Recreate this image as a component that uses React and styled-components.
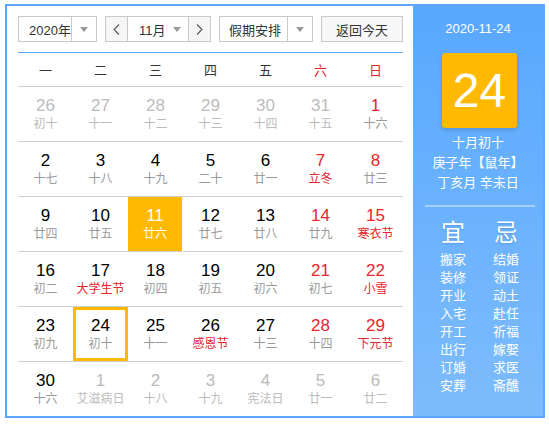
import React from "react";
import styled, { createGlobalStyle } from "styled-components";

const GlobalStyle = createGlobalStyle`
  html, body {
    margin: 0;
    padding: 0;
    background: #fff;
    font-family: "Liberation Sans", "Noto Sans CJK SC", sans-serif;
  }
`;

const days = [
  [
    { d: 26, l: "初十", other: true },
    { d: 27, l: "十一", other: true },
    { d: 28, l: "十二", other: true },
    { d: 29, l: "十三", other: true },
    { d: 30, l: "十四", other: true },
    { d: 31, l: "十五", other: true },
    { d: 1, l: "十六" },
  ],
  [
    { d: 2, l: "十七" },
    { d: 3, l: "十八" },
    { d: 4, l: "十九" },
    { d: 5, l: "二十" },
    { d: 6, l: "廿一" },
    { d: 7, l: "立冬", fest: true },
    { d: 8, l: "廿三" },
  ],
  [
    { d: 9, l: "廿四" },
    { d: 10, l: "廿五" },
    { d: 11, l: "廿六", selected: true },
    { d: 12, l: "廿七" },
    { d: 13, l: "廿八" },
    { d: 14, l: "廿九" },
    { d: 15, l: "寒衣节", fest: true },
  ],
  [
    { d: 16, l: "初二" },
    { d: 17, l: "大学生节", fest: true },
    { d: 18, l: "初四" },
    { d: 19, l: "初五" },
    { d: 20, l: "初六" },
    { d: 21, l: "初七" },
    { d: 22, l: "小雪", fest: true },
  ],
  [
    { d: 23, l: "初九" },
    { d: 24, l: "初十", today: true },
    { d: 25, l: "十一" },
    { d: 26, l: "感恩节", fest: true },
    { d: 27, l: "十三" },
    { d: 28, l: "十四" },
    { d: 29, l: "下元节", fest: true },
  ],
  [
    { d: 30, l: "十六" },
    { d: 1, l: "艾滋病日", other: true },
    { d: 2, l: "十八", other: true },
    { d: 3, l: "十九", other: true },
    { d: 4, l: "宪法日", other: true },
    { d: 5, l: "廿一", other: true },
    { d: 6, l: "廿二", other: true },
  ],
];

const weekdays = ["一", "二", "三", "四", "五", "六", "日"];
const yi = ["搬家", "装修", "开业", "入宅", "开工", "出行", "订婚", "安葬"];
const ji = ["结婚", "领证", "动土", "赴任", "祈福", "嫁娶", "求医", "斋醮"];

const RED = "#e8242c";

const Wrapper = styled.div`
  margin: 4px 0 0 5px;
  width: 536px;
  height: 410px;
  border: 2px solid #5aa9ff;
  display: flex;
`;

const Main = styled.div`
  width: 385px;
  padding: 10px 10px 0 11px;
`;

const Toolbar = styled.div`
  display: flex;
  gap: 8px;
  height: 26px;
  padding-bottom: 10px;
  border-bottom: 1px solid #5aa9ff;
`;

const Group = styled.div`
  display: flex;
  border: 1px solid #c9c9c9;
  background: #fff;
  width: ${(p) => p.$w}px;
  box-sizing: border-box;
  height: 26px;
`;

const SelectText = styled.div`
  flex: 1;
  display: flex;
  align-items: center;
  padding-left: ${(p) => p.$pad || 10}px;
  font-size: 13px;
  color: #333;
  white-space: nowrap;
`;

const ArrowBox = styled.div`
  width: ${(p) => p.$w || 24}px;
  flex-shrink: 0;
  display: flex;
  align-items: center;
  justify-content: center;
  border-left: ${(p) => (p.$divider ? "1px solid #c9c9c9" : "none")};
`;

const Caret = styled.span`
  width: 0;
  height: 0;
  border-left: 4px solid transparent;
  border-right: 4px solid transparent;
  border-top: 5px solid #999;
`;

const NavBtn = styled.div`
  width: 21px;
  flex-shrink: 0;
  display: flex;
  align-items: center;
  justify-content: center;
  background: #f6f6f6;
  border-left: ${(p) => (p.$right ? "1px solid #c9c9c9" : "none")};
  border-right: ${(p) => (p.$right ? "none" : "1px solid #c9c9c9")};
`;

const TodayBtn = styled.div`
  width: 82px;
  height: 26px;
  box-sizing: border-box;
  border: 1px solid #c9c9c9;
  background: #f7f7f7;
  display: flex;
  align-items: center;
  justify-content: center;
  font-size: 13px;
  color: #333;
`;

const Grid = styled.div`
  display: grid;
  grid-template-columns: repeat(7, 55px);
`;

const HeadCell = styled.div`
  height: 33px;
  border-bottom: 1px solid #cfcfcf;
  display: flex;
  align-items: center;
  justify-content: center;
  font-size: 13px;
  color: ${(p) => (p.$weekend ? RED : "#333")};
`;

const Cell = styled.div`
  height: 55px;
  box-sizing: border-box;
  border-bottom: ${(p) => (p.$last ? "none" : "1px solid #cfcfcf")};
  display: flex;
  flex-direction: column;
  align-items: center;
  justify-content: center;
  background: ${(p) => (p.$selected ? "#ffb900" : "transparent")};
  box-shadow: ${(p) => (p.$today ? "inset 0 0 0 3px #ffb900" : "none")};
  margin-right: ${(p) => (p.$selected ? 1 : 0)}px;
`;

const Num = styled.div`
  font-size: 17px;
  line-height: 20px;
  color: ${(p) => p.$color};
`;

const Lunar = styled.div`
  font-size: 12px;
  line-height: 17px;
  color: ${(p) => p.$color};
`;

const Side = styled.div`
  width: 130px;
  background: linear-gradient(#58a8ff, #7dbcfc);
  display: flex;
  flex-direction: column;
  align-items: center;
  color: #fff;
`;

const SideDate = styled.div`
  font-size: 13px;
  margin-top: 14px;
  line-height: 18px;
`;

const BigDay = styled.div`
  margin: 15px 0 5px 3px;
  width: 75px;
  height: 75px;
  background: #ffb900;
  border-radius: 3px;
  box-shadow: 0 2px 4px rgba(0, 0, 0, 0.15);
  display: flex;
  align-items: center;
  justify-content: center;
  font-size: 48px;
`;

const InfoLine = styled.div`
  font-size: 13px;
  line-height: 20px;
`;

const Divider = styled.div`
  width: 110px;
  height: 2px;
  background: rgba(255, 255, 255, 0.4);
  margin-top: 12px;
  margin-left: 3px;
`;

const Columns = styled.div`
  display: flex;
  gap: 27px;
  margin-top: 12px;
  margin-left: 3px;
`;

const Column = styled.div`
  display: flex;
  flex-direction: column;
  align-items: center;
`;

const ColTitle = styled.div`
  font-size: 24px;
  line-height: 28px;
  margin-bottom: 4px;
  text-shadow: 0 1px 2px rgba(0, 0, 0, 0.15);
`;

const Item = styled.div`
  font-size: 13px;
  line-height: 18px;
`;

const Chevron = ({ left }) => (
  <svg width="7" height="11" viewBox="0 0 7 11">
    <polyline
      points={left ? "6,0.5 1,5.5 6,10.5" : "1,0.5 6,5.5 1,10.5"}
      fill="none"
      stroke="#555"
      strokeWidth="1.1"
    />
  </svg>
);

export default function App() {
  return (
    <>
      <GlobalStyle />
      <Wrapper>
        <Main>
          <Toolbar>
            <Group $w={79}>
              <SelectText>2020年</SelectText>
              <ArrowBox $divider>
                <Caret />
              </ArrowBox>
            </Group>
            <Group $w={106}>
              <NavBtn>
                <Chevron left />
              </NavBtn>
              <SelectText $pad={11}>11月</SelectText>
              <ArrowBox $w={22}>
                <Caret />
              </ArrowBox>
              <NavBtn $right>
                <Chevron />
              </NavBtn>
            </Group>
            <Group $w={94}>
              <SelectText $pad={9}>假期安排</SelectText>
              <ArrowBox $divider>
                <Caret />
              </ArrowBox>
            </Group>
            <TodayBtn>返回今天</TodayBtn>
          </Toolbar>
          <Grid>
            {weekdays.map((w, i) => (
              <HeadCell key={w} $weekend={i >= 5}>
                {w}
              </HeadCell>
            ))}
            {days.map((row, r) =>
              row.map((c, i) => {
                let numColor = i >= 5 ? RED : "#000";
                let lunarColor = c.fest ? RED : "#999";
                if (c.other) {
                  numColor = "#bbb";
                  lunarColor = "#bbb";
                }
                if (c.selected) {
                  numColor = "#fff";
                  lunarColor = "#fff";
                }
                return (
                  <Cell
                    key={`${r}-${i}`}
                    $last={r === days.length - 1}
                    $selected={c.selected}
                    $today={c.today}
                  >
                    <Num $color={numColor}>{c.d}</Num>
                    <Lunar $color={lunarColor}>{c.l}</Lunar>
                  </Cell>
                );
              })
            )}
          </Grid>
        </Main>
        <Side>
          <SideDate>2020-11-24</SideDate>
          <BigDay>24</BigDay>
          <InfoLine>十月初十</InfoLine>
          <InfoLine>庚子年【鼠年】</InfoLine>
          <InfoLine>丁亥月 辛未日</InfoLine>
          <Divider />
          <Columns>
            <Column>
              <ColTitle>宜</ColTitle>
              {yi.map((t) => (
                <Item key={t}>{t}</Item>
              ))}
            </Column>
            <Column>
              <ColTitle>忌</ColTitle>
              {ji.map((t) => (
                <Item key={t}>{t}</Item>
              ))}
            </Column>
          </Columns>
        </Side>
      </Wrapper>
    </>
  );
}
